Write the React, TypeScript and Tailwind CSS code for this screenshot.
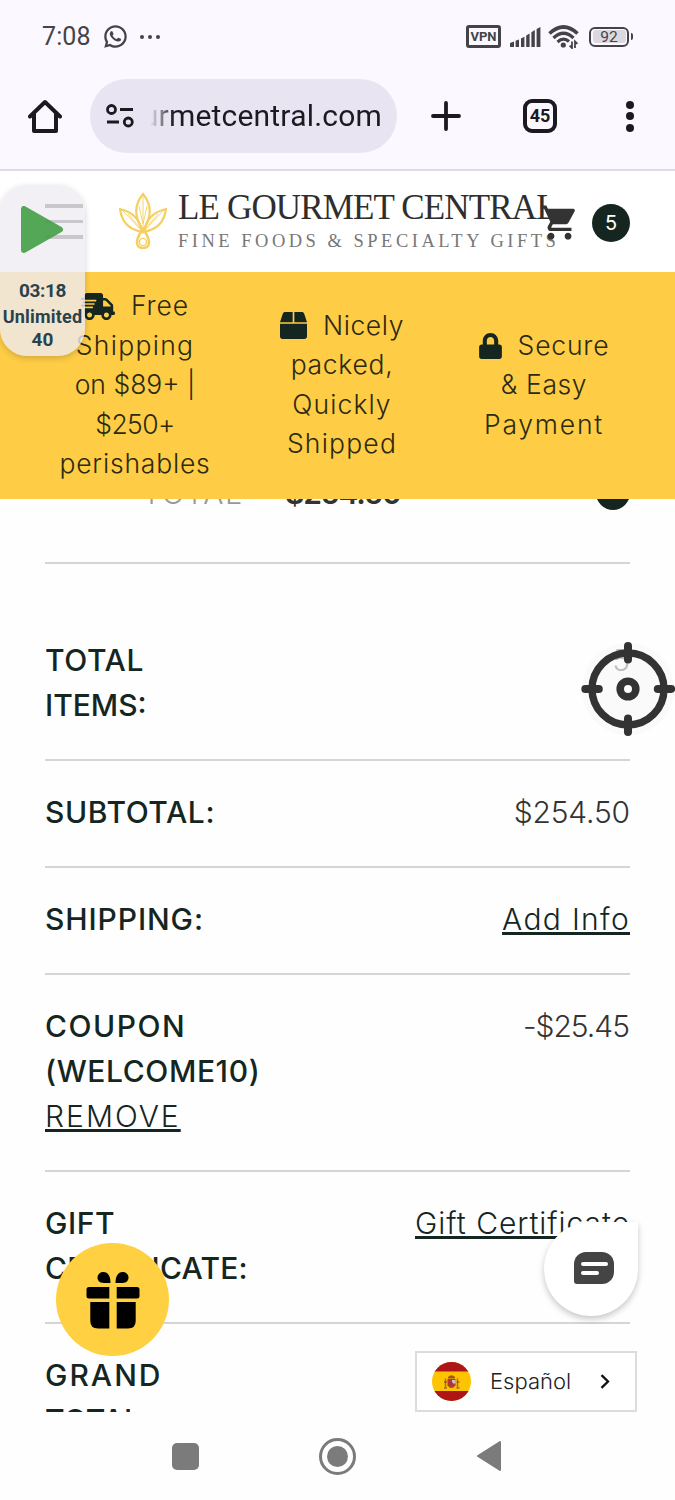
import type { ReactNode } from "react";
import { FaBox, FaLock, FaShippingFast } from "react-icons/fa";
import { MdShoppingCart } from "react-icons/md";
import { RiWhatsappLine } from "react-icons/ri";

function StatusBar() {
  return (
    <div className="flex h-[73px] items-center pl-[42px] pr-[42px] text-[#444348]">
      <span className="font-[Roboto,sans-serif] text-[25px] leading-none tracking-[0.1px]">
        7:08
      </span>
      <RiWhatsappLine className="ml-[11px] h-[27px] w-[27px]" />
      <span className="ml-[11px] flex gap-1">
        <i className="h-1 w-1 rounded-full bg-current" />
        <i className="h-1 w-1 rounded-full bg-current" />
        <i className="h-1 w-1 rounded-full bg-current" />
      </span>
      <div className="ml-auto flex items-center">
        <span className="flex h-[23px] w-[35px] items-center justify-center rounded-[3px] border-[3px] border-current font-[Roboto,sans-serif] text-[13px] font-bold leading-none">
          VPN
        </span>
        <svg className="ml-[9px]" width="31" height="20" viewBox="0 0 31 20" fill="currentColor">
          <path d="M0 16l4-1.6V20H0zM5.6 13.8l3.4-1.4V20H5.6zM11 11.4l3.4-1.6V20H11zM16.2 8.4l3.4-2V20h-3.4zM21.4 5.2l3.4-2.2V20h-3.4zM26.6 2L30.4 0v20h-3.8z" />
        </svg>
        <svg className="ml-[7px]" width="32" height="24" viewBox="0 0 32 24" fill="none" stroke="currentColor">
          <path d="M1.5 8.5Q15.5-4.5 29.5 8.5" strokeWidth="3.6" />
          <path d="M5.5 13Q15.5 3.5 25.5 13" strokeWidth="3.4" />
          <path d="M9.5 17Q15.5 11.5 21 16.5" strokeWidth="3.2" />
          <circle cx="15.3" cy="20" r="2.6" fill="currentColor" stroke="none" />
          <path d="M24 16.5V23l-2.4-2.4M27 23v-6.5l2.4 2.4" strokeWidth="1.8" />
        </svg>
        <span className="ml-[9px] flex h-5 w-10 items-center rounded-md border-2 border-current p-[1.5px]">
          <span className="flex h-full w-full items-center justify-center rounded-[3px] bg-[#dbd9df] pt-[2px] font-[Roboto,sans-serif] text-[15.5px] leading-none">
            92
          </span>
        </span>
        <i className="ml-[1.5px] h-[7px] w-[2.5px] rounded-r bg-current" />
      </div>
    </div>
  );
}

function BrowserBar() {
  return (
    <div className="flex h-[96px] items-center pb-[10px] pl-7 pr-[41px] text-[#1b1a20]">
      <svg width="34" height="34" viewBox="0 0 34 34" fill="none" stroke="currentColor" strokeWidth="4" strokeLinecap="round" strokeLinejoin="round">
        <path d="M2 17.5L17 3l15 14.5" />
        <path d="M6 14.5V32h22V14.5" />
      </svg>
      <div className="ml-7 flex h-[74px] w-[307px] items-center rounded-full bg-[#e8e4f2] pl-4">
        <svg width="28" height="24" viewBox="0 0 28 24" fill="none" stroke="currentColor" strokeWidth="2.8">
          <circle cx="5.5" cy="5.5" r="4" />
          <path d="M14 5.5h13M1 18h12" />
          <circle cx="22.3" cy="18" r="4" />
        </svg>
        <div className="ml-4 flex h-10 w-[232px] items-center justify-end overflow-hidden [mask-image:linear-gradient(to_right,transparent,black_24px)]">
          <span className="shrink-0 font-[Roboto,sans-serif] text-[30px] leading-10 tracking-[0.2px]">
            legourmetcentral.com
          </span>
        </div>
      </div>
      <svg className="ml-[34px]" width="30" height="30" viewBox="0 0 30 30" stroke="currentColor" strokeWidth="3.8" strokeLinecap="round">
        <path d="M15 2v26M2 15h26" />
      </svg>
      <span className="ml-[62px] flex h-[34px] w-[34px] items-center justify-center rounded-[9px] border-4 border-current font-[Roboto,sans-serif] text-[18px] font-bold leading-none">
        45
      </span>
      <span className="ml-auto flex flex-col gap-[3.5px]">
        <i className="h-2 w-2 rounded-full bg-current" />
        <i className="h-2 w-2 rounded-full bg-current" />
        <i className="h-2 w-2 rounded-full bg-current" />
      </span>
    </div>
  );
}

function SiteHeader() {
  return (
    <header className="relative flex h-[101px] bg-white pl-[45px]">
      <div className="flex w-[38px] flex-col gap-3 pt-[33px]">
        <i className="h-[3.5px] bg-[#333]" />
        <i className="h-[3.5px] bg-[#333]" />
        <i className="h-[3.5px] bg-[#333]" />
      </div>
      <svg className="ml-9 mt-[21px]" width="48" height="60" viewBox="0 0 48 60" fill="none" stroke="#f6cf63" strokeWidth="2.2">
        <path d="M24 2C15 13 15 25 24 38C33 25 33 13 24 2Z" />
        <path d="M1 17C3 31 10 37 23 40C21 27 14 20 1 17Z" />
        <path d="M47 17C45 31 38 37 25 40C27 27 34 20 47 17Z" />
        <path d="M24 4v34M3 18l20 21M45 18L25 39M20 14l4 18 4-18M9 22l13 15M39 22L26 37" strokeWidth="0.9" />
        <path d="M23 38C14 52 19 56 24 56S34 52 25 38" strokeWidth="2.6" />
        <circle cx="24" cy="50" r="3.6" strokeWidth="1.4" />
      </svg>
      <div className="ml-[11px] whitespace-nowrap pt-[18px] font-['Liberation_Serif',serif] text-[#2e2e2e]">
        <div className="text-[35px] leading-[38px] tracking-[-0.85px]">LE GOURMET CENTRAL</div>
        <div className="mt-[2px] text-[18.5px] leading-6 tracking-[3.5px] text-[#777]">
          FINE FOODS &amp; SPECIALTY GIFTS
        </div>
      </div>
      <MdShoppingCart className="absolute left-[539px] top-[31px] h-[41px] w-[41px] text-[#333]" />
      <span className="absolute left-[592px] top-[33px] flex h-[38px] w-[38px] items-center justify-center rounded-full bg-[#14261f] text-[20px] text-white">
        5
      </span>
    </header>
  );
}

function Promo({ icon, children }: { icon: ReactNode; children: ReactNode[] }) {
  return (
    <div className="flex flex-col items-center whitespace-nowrap">
      {children.map((line, i) => (
        <div key={i} className="flex h-[39.4px] items-center">
          {i === 0 && icon}
          {line}
        </div>
      ))}
    </div>
  );
}

function PromoBanner() {
  return (
    <div className="grid h-[227px] grid-cols-[180px_234px_170px] items-center bg-[#fecd45] pb-px pl-[45px] text-[26.5px] font-light text-[#2c2a12]">
      <Promo icon={<FaShippingFast className="mr-4 h-[27px] w-[34px] text-[#14261f]" />}>
        <span className="tracking-[0.9px]">Free</span>
        <span className="tracking-[1.3px]">Shipping</span>
        <span>on $89+ |</span>
        <span className="tracking-[-0.6px]">$250+</span>
        <span className="tracking-[0.8px]">perishables</span>
      </Promo>
      <Promo icon={<FaBox className="mr-4 h-[27px] w-[27px] text-[#14261f]" />}>
        <span className="tracking-[0.6px]">Nicely</span>
        <span className="tracking-[0.7px]">packed,</span>
        <span className="tracking-[1.1px]">Quickly</span>
        <span className="tracking-[1.2px]">Shipped</span>
      </Promo>
      <Promo icon={<FaLock className="mr-4 h-[26px] w-[23px] text-[#14261f]" />}>
        <span className="tracking-[0.8px]">Secure</span>
        <span className="tracking-[0.6px]">&amp; Easy</span>
        <span className="tracking-[1.8px]">Payment</span>
      </Promo>
    </div>
  );
}

function SummaryRow({ label, children }: { label: ReactNode; children?: ReactNode }) {
  return (
    <div className="flex justify-between border-b-2 border-[#d4d5d5] pb-[31px] pt-[29px] text-[30px] leading-[45px]">
      <div className="flex flex-col items-start whitespace-nowrap font-medium">{label}</div>
      <div className="whitespace-nowrap font-light text-[#333]">{children}</div>
    </div>
  );
}

function OrderSummary() {
  return (
    <main className="h-[913px] overflow-hidden px-[45px] text-[#14261f]">
      <div className="flex h-[65px] items-start border-b-2 border-[#d4d5d5]">
        <div className="-mt-[23px] flex h-[34px] w-full items-center text-[30px]">
          <span className="ml-[97px] w-[143px] font-light tracking-[1.6px] text-[#999]">TOTAL</span>
          <span className="font-semibold tracking-[-1.2px] text-[#333]">$254.50</span>
          <span className="ml-auto h-[34px] w-[34px] rounded-full bg-[#14261f]" />
        </div>
      </div>
      <div className="pt-[45px]">
        <SummaryRow
          label={
            <>
              <span className="tracking-[0.6px]">TOTAL</span>
              <span>ITEMS:</span>
            </>
          }
        >
          5
        </SummaryRow>
        <SummaryRow label={<span className="tracking-[0.6px]">SUBTOTAL:</span>}>
          <span className="tracking-[-0.15px]">$254.50</span>
        </SummaryRow>
        <SummaryRow label={<span className="tracking-[0.9px]">SHIPPING:</span>}>
          <a className="tracking-[1.3px] text-[#14261f] underline">Add Info</a>
        </SummaryRow>
        <SummaryRow
          label={
            <>
              <span className="tracking-[1.5px]">COUPON</span>
              <span className="tracking-[0.6px]">(WELCOME10)</span>
              <a className="font-light tracking-[2px] underline">REMOVE</a>
            </>
          }
        >
          <span className="mr-px tracking-[-1px]">-$25.45</span>
        </SummaryRow>
        <SummaryRow
          label={
            <>
              <span className="tracking-[0.6px]">GIFT</span>
              <span className="tracking-[0.25px]">CERTIFICATE:</span>
            </>
          }
        >
          <a className="tracking-[0.95px] text-[#14261f] underline">Gift Certificate</a>
        </SummaryRow>
        <SummaryRow
          label={
            <>
              <span className="tracking-[2px]">GRAND</span>
              <span>TOTAL:</span>
            </>
          }
        />
      </div>
    </main>
  );
}

function SystemNav() {
  return (
    <nav className="flex h-[88px] items-center pl-[172px] text-[#7b7b7b]">
      <span className="h-[27px] w-[27px] rounded-[5px] bg-current" />
      <span className="ml-[120px] flex h-[37px] w-[37px] items-center justify-center rounded-full border-[3px] border-current">
        <i className="h-[21px] w-[21px] rounded-full bg-current" />
      </span>
      <svg className="ml-[120px]" width="26" height="32" viewBox="0 0 26 32" fill="currentColor" stroke="currentColor" strokeWidth="2" strokeLinejoin="round">
        <path d="M2 16L24 2v28z" />
      </svg>
    </nav>
  );
}

/* Floating recorder with the play button */
function Recorder() {
  return (
    <div className="absolute left-0 top-[185px] h-[171px] w-[85px] rounded-[27px] bg-[#efebf3]/80 pt-5 text-center font-[Roboto,sans-serif] font-bold text-[#2a424d] shadow-[0_2px_6px_rgba(0,0,0,0.18)]">
      <svg className="ml-5 opacity-90" width="44" height="49" viewBox="0 0 44 49" fill="#43a047" stroke="#43a047" strokeWidth="6" strokeLinejoin="round">
        <path d="M4 4v41L40 24.5z" />
      </svg>
      <div className="mt-[25px] text-[19px] leading-6 tracking-[-0.4px]">03:18</div>
      <div className="mt-[2px] text-[18px] leading-6 tracking-[0.2px]">Unlimited</div>
      <div className="text-[19px] leading-[22px]">40</div>
    </div>
  );
}

function Crosshair() {
  return (
    <svg className="absolute left-[579px] top-[640px]" width="96" height="98" viewBox="0 0 96 98" fill="none" stroke="#333">
      <circle cx="49" cy="49" r="46" fill="#f8f8f8" fillOpacity="0.7" stroke="none" />
      <circle cx="49" cy="49" r="36" strokeWidth="7.4" />
      <circle cx="49" cy="49" r="7.8" strokeWidth="7.6" />
      <path d="M49 6v13.5M49 78.5V92M6.3 49h13.5M78.8 49h13.4" strokeWidth="8" strokeLinecap="round" />
    </svg>
  );
}

function GiftButton() {
  return (
    <button className="absolute left-[56px] top-[1243px] flex h-[113px] w-[113px] items-center justify-center rounded-full bg-[#ffd042]">
      <svg width="54" height="58" viewBox="0 0 54 58" fill="black">
        <path d="M24.5 12H18C13 12 11.5 9 11.5 6.5C11.5 3 14.5 1 17.5 1C22 1 24.5 5 24.5 12Z" />
        <path d="M29.5 12H36C41 12 42.5 9 42.5 6.5C42.5 3 39.5 1 36.5 1C32 1 29.5 5 29.5 12Z" />
        <path d="M3 16H23.3V27.5H3Q0.5 27.5 0.5 25V18.5Q0.5 16 3 16ZM30.7 16H51Q53.5 16 53.5 18.5V25Q53.5 27.5 51 27.5H30.7Z" />
        <path d="M4.3 31H23.3V57.5H12Q4.3 57.5 4.3 50ZM30.7 31H49.7V50Q49.7 57.5 42 57.5H30.7Z" />
      </svg>
    </button>
  );
}

function ChatButton() {
  return (
    <button className="absolute left-[544px] top-[1222px] flex h-[94px] w-[94px] items-center justify-center rounded-full rounded-tr-[10px] bg-white pl-[6px] shadow-[0_3px_6px_rgba(0,0,0,0.22)]">
      <span className="mt-[-2px] flex h-8 w-10 flex-col justify-center gap-[5px] rounded-[12px] rounded-bl-[3px] bg-[#444] pl-[7px]">
        <i className="h-1 w-[27px] rounded-sm bg-white" />
        <i className="h-1 w-[18px] rounded-sm bg-white" />
      </span>
    </button>
  );
}

function LanguagePicker() {
  return (
    <button className="absolute left-[415px] top-[1351px] flex h-[61px] w-[222px] items-center border-2 border-[#dcdcdc] bg-white pl-[15px] text-[22px] font-light text-[#222]">
      <svg width="39" height="39" viewBox="0 0 39 39">
        <clipPath id="flag">
          <circle cx="19.5" cy="19.5" r="19.5" />
        </clipPath>
        <g clipPath="url(#flag)">
          <path d="M0 0h39v39H0z" fill="#ffc400" />
          <path d="M0 0h39v9.5H0zM0 29h39v10H0z" fill="#ad1519" />
          <path d="M13.5 16.5v9M25.5 16.5v9" stroke="#b4642c" strokeWidth="1.5" />
          <path d="M15.5 17h8v6.5q-4 5-8 0z" fill="#b83a22" />
          <path d="M16 15q3.5-3.5 7 0v1.5h-7z" fill="#a3521f" />
          <path d="M20 18h3.5v3.5H20z" fill="#d9b7bd" />
          <path d="M12 20h3M24.5 20h3M12 26h3M24.5 26h3" stroke="#7b4a2f" strokeWidth="1.2" />
          <circle cx="19.5" cy="21.5" r="1.3" fill="#4a4a8a" />
        </g>
      </svg>
      <span className="ml-[19px] w-[110px] text-left">Español</span>
      <svg width="10" height="15" viewBox="0 0 10 15" fill="none" stroke="#111" strokeWidth="2.3">
        <path d="M1.5 1.2L8 7.5l-6.5 6.3" />
      </svg>
    </button>
  );
}

export default function App() {
  return (
    <div className="relative flex h-[1500px] w-[675px] flex-col overflow-hidden bg-[#fefefe] font-[Inter,sans-serif]">
      <div className="h-[171px] border-b-2 border-[#dedbe4] bg-[#fbf8ff]">
        <StatusBar />
        <BrowserBar />
      </div>
      <SiteHeader />
      <PromoBanner />
      <OrderSummary />
      <SystemNav />
      <Recorder />
      <Crosshair />
      <GiftButton />
      <ChatButton />
      <LanguagePicker />
    </div>
  );
}
